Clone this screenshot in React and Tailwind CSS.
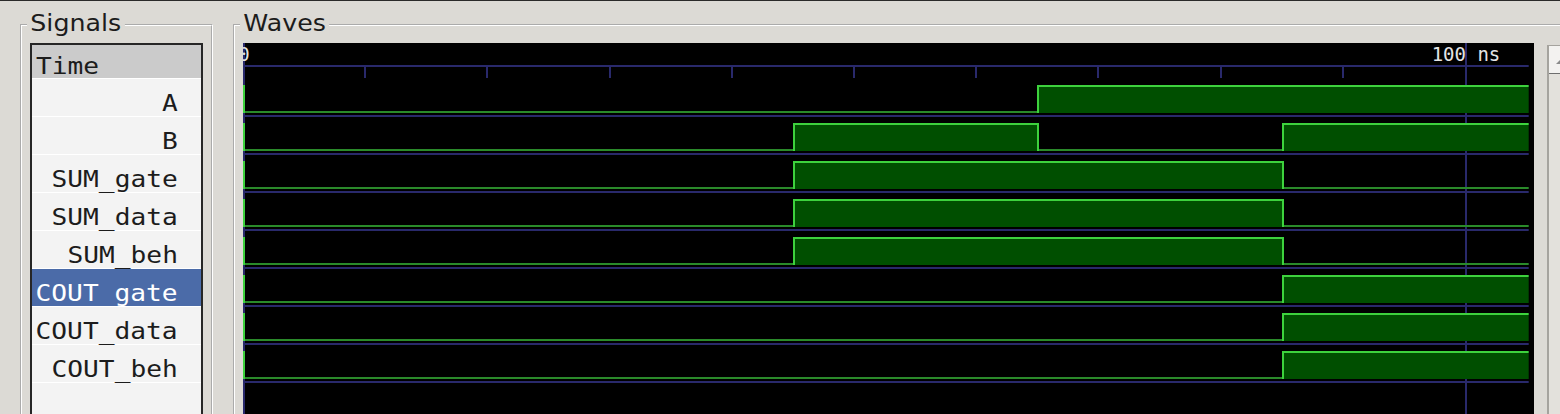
import React from "react";

const NS = 12.222;
const END = 1285.7;

const signals = [
  { name: "A", edges: [[0, 0], [65, 1]] },
  { name: "B", edges: [[0, 0], [45, 1], [65, 0], [85, 1]] },
  { name: "SUM_gate", edges: [[0, 0], [45, 1], [85, 0]] },
  { name: "SUM_data", edges: [[0, 0], [45, 1], [85, 0]] },
  { name: "SUM_beh", edges: [[0, 0], [45, 1], [85, 0]] },
  { name: "COUT_gate", edges: [[0, 0], [85, 1]], selected: true },
  { name: "COUT_data", edges: [[0, 0], [85, 1]] },
  { name: "COUT_beh", edges: [[0, 0], [85, 1]] },
];

const xOf = (t) => Math.round(t * NS);

function FrameLabel({ children }) {
  return (
    <span className="absolute left-[5px] top-[-16px] bg-[#dcdad5] px-[3px] text-[23px] leading-[26px] text-[#1c1c1c] origin-left scale-x-[1.1]">
      {children}
    </span>
  );
}

function SignalsFrame() {
  return (
    <div className="relative w-[193px] h-[420px] shrink-0 border-2 [border-style:groove] border-white pt-[17px] px-[8px]">
      <FrameLabel>Signals</FrameLabel>
      <div className="h-[380px] border-2 border-[#262626] bg-[#f3f3f3] font-['DejaVu_Sans_Mono',monospace] text-[23px] text-[#1c1c1c]">
        <div className="h-[33px] bg-[#cbcbcb] pt-[8px] pl-[4px] leading-[26px]">
          <span className="inline-block origin-left scale-x-[1.14]">Time</span>
        </div>
        {signals.map((s) => (
          <div
            key={s.name}
            className={
              s.selected
                ? "h-[38px] border-t border-white bg-[#4b6ba8] text-white pt-[11px] pr-[23px] text-right leading-[26px]"
                : "h-[38px] border-t border-white pt-[11px] pr-[23px] text-right leading-[26px]"
            }
          >
            <span className="inline-block origin-right scale-x-[1.14]">{s.name}</span>
          </div>
        ))}
        <div className="h-[40px] border-t border-white" />
      </div>
    </div>
  );
}

function Wave({ edges, base }) {
  const parts = [];
  edges.forEach(([t, v], i) => {
    const x0 = xOf(t);
    const x1 = i + 1 < edges.length ? xOf(edges[i + 1][0]) : END;
    if (v) {
      parts.push(<rect key={"f" + i} x={x0} y={base + 44} width={x1 - x0} height={26} fill="#004f00" />);
      parts.push(<rect key={"h" + i} x={x0} y={base + 42} width={x1 - x0} height={2} fill="#3dd23d" />);
    } else {
      parts.push(<rect key={"l" + i} x={x0} y={base + 68} width={x1 - x0} height={2} fill="#2a8a2a" />);
    }
    parts.push(<rect key={"t" + i} x={x0} y={base + 42} width={2} height={28} fill="#3dd23d" />);
  });
  return <g>{parts}</g>;
}

function WaveView() {
  const ticks = [1, 2, 3, 4, 5, 6, 7, 8, 9];
  return (
    <svg width="1291" height="380" className="block shrink-0 bg-black">
      <rect x="0" y="0" width="2" height="380" fill="#29296b" />
      <rect x="1222" y="0" width="2" height="380" fill="#29296b" />
      <rect x="0" y="22" width={END} height="2" fill="#29296b" />
      {ticks.map((k) => (
        <rect key={k} x={Math.round(k * 122.2) - 1} y="22" width="2" height="13" fill="#29296b" />
      ))}
      <text x="1" y="18" fontSize="19" fill="#e4e4e4" textAnchor="middle" fontFamily="DejaVu Sans Mono, monospace">
        0
      </text>
      <text x="1223" y="18" fontSize="19" fill="#e4e4e4" textAnchor="middle" fontFamily="DejaVu Sans Mono, monospace">
        100 ns
      </text>
      {signals.map((s, k) => (
        <g key={s.name}>
          <rect x="0" y={72 + 38 * k} width={END} height="2" fill="#29296b" />
          <Wave edges={s.edges} base={38 * k} />
        </g>
      ))}
    </svg>
  );
}

function WavesFrame() {
  return (
    <div className="relative w-[1400px] h-[420px] shrink-0 border-2 [border-style:groove] border-white pt-[17px] pl-[8px] flex items-start gap-[13px]">
      <FrameLabel>Waves</FrameLabel>
      <WaveView />
      {/* vertical scrollbar, mostly cut off */}
      <div className="mt-[2px] w-[30px] h-[380px] shrink-0 border-l-2 border-t border-[#a5a39e] bg-[#e3e1dc]">
        <div className="h-[28px] bg-[#f3f2f0] border-b border-[#6e6e6e] flex justify-center pt-[11px]">
          <svg width="14" height="8" className="block">
            <path d="M0 7 L7 0 L14 7 Z" fill="#8a8a8a" />
          </svg>
        </div>
      </div>
    </div>
  );
}

export default function App() {
  return (
    <div className="w-[1560px] h-[414px] overflow-hidden bg-[#dcdad5] border-t border-[#2a2a2a] font-['DejaVu_Sans',sans-serif]">
      <div className="flex items-start gap-[20px] pl-[20px] pt-[23px]">
        <SignalsFrame />
        <WavesFrame />
      </div>
    </div>
  );
}
